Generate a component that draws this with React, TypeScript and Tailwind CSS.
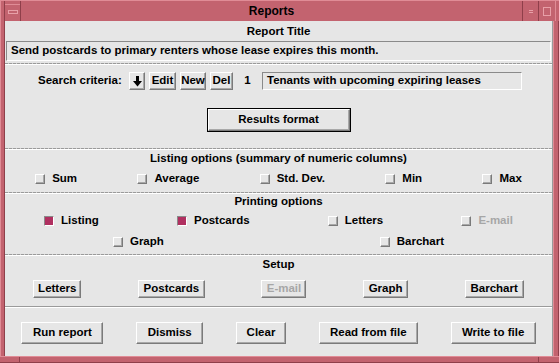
import React from "react";

const raised =
  "border border-t-white border-l-white border-b-[#7a7a7a] border-r-[#7a7a7a] shadow-[inset_-1px_-1px_0_#a8a8a8]";
const sunken =
  "border border-t-[#8a8a8a] border-l-[#8a8a8a] border-b-white border-r-white";

function Btn({
  children,
  w,
  h,
  disabled,
}: {
  children: React.ReactNode;
  w: string;
  h: string;
  disabled?: boolean;
}) {
  return (
    <div
      className={`flex items-center justify-center bg-[#e6e6e6] ${raised} ${w} ${h} ${
        disabled ? "text-[#a6a6a6]" : "text-black"
      }`}
    >
      {children}
    </div>
  );
}

function Check({
  label,
  checked,
  disabled,
}: {
  label: string;
  checked?: boolean;
  disabled?: boolean;
}) {
  return (
    <div className="flex items-center">
      <div
        className={`w-[10px] h-[10px] ${
          checked ? `bg-[#b03060] ${sunken}` : `bg-[#e6e6e6] ${raised}`
        }`}
      />
      <span className={`ml-[7px] ${disabled ? "text-[#a6a6a6]" : "text-black"}`}>{label}</span>
    </div>
  );
}

function DashSep() {
  return (
    <div className="flex flex-col h-[2px]">
      <div className="h-px bg-[repeating-linear-gradient(90deg,#9a9a9a_0px,#9a9a9a_3px,#d0d0d0_3px,#d0d0d0_4px)]" />
      <div className="h-px bg-white" />
    </div>
  );
}

export default function App() {
  return (
    <div className="w-[559px] h-[363px] bg-[#c3636f] flex flex-col font-['Liberation_Sans',Arial,sans-serif] text-[11.5px] font-bold leading-none overflow-hidden">
      {/* title bar */}
      <div className="h-[21px] flex border-t border-[#e08c96]">
        <div className="w-[5px] border-l border-[#e08c96] border-r border-r-[#8f3f4a]" />
        <div className="w-[15px] flex items-center justify-center border-t border-[#e08c96] mt-[3px]">
          <div className="w-[10px] h-[4px] border border-[#e8a0a8] -mt-[3px]" />
        </div>
        <div className="w-px bg-[#8f3f4a]" />
        <div className="flex-1 flex items-center justify-center text-black text-[12px]">Reports</div>
        <div className="w-px bg-[#8f3f4a]" />
        <div className="w-[15px] flex items-center justify-center">
          <div className="w-[4px] h-[3px] border-t border-b border-[#e8a0a8]" />
        </div>
        <div className="w-px bg-[#8f3f4a]" />
        <div className="w-[16px] flex items-center justify-center">
          <div className="w-[8px] h-[9px] border border-[#e8a0a8]" />
        </div>
        <div className="w-[4px] border-l border-[#e08c96]" />
      </div>

      {/* body */}
      <div className="flex flex-1">
        <div className="w-[5px] border-l border-[#e08c96] border-r border-r-[#8f3f4a]" />
        <div className="w-[548px] h-[335px] bg-[#e6e6e6] flex flex-col border-r border-[#9a9a9a]">
          <div className="h-[20px] flex items-center justify-center pt-[1px]">Report Title</div>
          <div className={`mx-[1px] h-[20px] flex items-center pl-[4px] ${sunken}`}>
            Send postcards to primary renters whose lease expires this month.
          </div>
          <div className="h-[2px]" />
          <DashSep />
          <div className="h-[7px]" />
          {/* search row */}
          <div className="h-[18px] flex items-center pl-[33px]">
            <span className="w-[91px]">Search criteria:</span>
            <Btn w="w-[16px]" h="h-[18px]">
              <svg width="9" height="11" viewBox="0 0 9 11">
                <rect x="3" y="0" width="3" height="6" fill="#000" />
                <polygon points="0,5 9,5 4.5,10.5" fill="#000" />
              </svg>
            </Btn>
            <div className="w-[4px]" />
            <Btn w="w-[27px]" h="h-[18px]">Edit</Btn>
            <div className="w-[4px]" />
            <Btn w="w-[26px]" h="h-[18px]">New</Btn>
            <div className="w-[4px]" />
            <Btn w="w-[23px]" h="h-[18px]">Del</Btn>
            <span className="w-[29px] text-center">1</span>
            <div className={`w-[260px] h-[18px] flex items-center pl-[4px] ${sunken}`}>
              Tenants with upcoming expiring leases
            </div>
          </div>
          <div className="h-[18px]" />
          <div className="h-[24px] flex justify-center">
            <div className="border border-black flex">
              <Btn w="w-[142px]" h="h-[22px]">Results format</Btn>
            </div>
          </div>
          <div className="h-[16px]" />
          <DashSep />
          <div className="h-[16px] flex items-center justify-center pt-[2px]">
            Listing options (summary of numeric columns)
          </div>
          <div className="h-[26px] flex items-center justify-around">
            <Check label="Sum" />
            <Check label="Average" />
            <Check label="Std. Dev." />
            <Check label="Min" />
            <Check label="Max" />
          </div>
          <DashSep />
          <div className="h-[14px] flex items-center justify-center pt-[1px]">Printing options</div>
          <div className="h-[26px] flex items-center justify-around">
            <Check label="Listing" checked />
            <Check label="Postcards" checked />
            <Check label="Letters" />
            <Check label="E-mail" disabled />
          </div>
          <div className="h-[16px] flex items-center justify-around">
            <Check label="Graph" />
            <Check label="Barchart" />
          </div>
          <div className="h-[4px]" />
          <DashSep />
          <div className="h-[18px] flex items-center justify-center">Setup</div>
          <div className="h-[6px]" />
          <div className="h-[18px] flex items-center justify-around">
            <Btn w="w-[48px]" h="h-[18px]">Letters</Btn>
            <Btn w="w-[67px]" h="h-[18px]">Postcards</Btn>
            <Btn w="w-[45px]" h="h-[18px]" disabled>E-mail</Btn>
            <Btn w="w-[45px]" h="h-[18px]">Graph</Btn>
            <Btn w="w-[59px]" h="h-[18px]">Barchart</Btn>
          </div>
          <div className="h-[8px]" />
          <div className="flex flex-col h-[2px]">
            <div className="h-px bg-[#9a9a9a]" />
            <div className="h-px bg-white" />
          </div>
          <div className="h-[14px]" />
          <div className="h-[22px] flex items-center justify-around">
            <Btn w="w-[82px]" h="h-[22px]">Run report</Btn>
            <Btn w="w-[67px]" h="h-[22px]">Dismiss</Btn>
            <Btn w="w-[50px]" h="h-[22px]">Clear</Btn>
            <Btn w="w-[99px]" h="h-[22px]">Read from file</Btn>
            <Btn w="w-[85px]" h="h-[22px]">Write to file</Btn>
          </div>
        </div>
        <div className="w-[6px] border-l border-[#e08c96] border-r border-r-[#8f3f4a]" />
      </div>
      <div className="h-[7px] border-t border-[#e08c96] border-b border-b-[#8f3f4a] flex">
        <div className="w-[20px] border-r border-[#8f3f4a]" />
        <div className="flex-1" />
        <div className="w-[21px] border-l border-[#8f3f4a]" />
      </div>
    </div>
  );
}
